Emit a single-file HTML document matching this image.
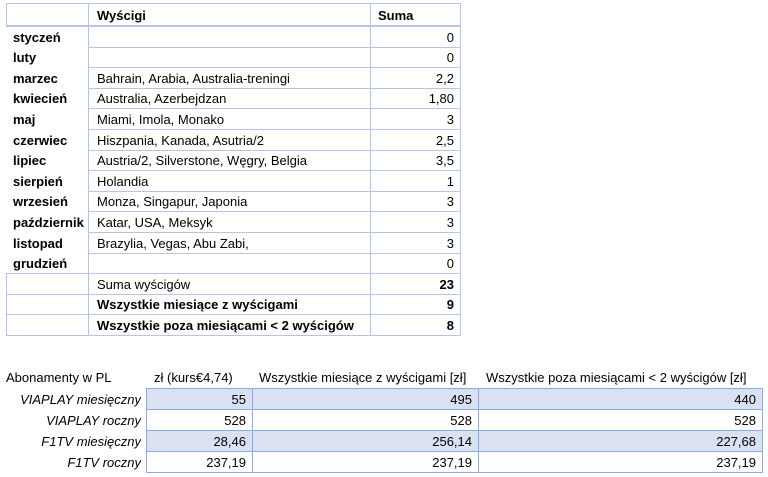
<!DOCTYPE html>
<html><head><meta charset="utf-8"><style>
*{margin:0;padding:0;box-sizing:border-box}
body{width:768px;height:477px;background:#fff;font-family:"Liberation Sans",sans-serif;color:#000;position:relative;overflow:hidden}
.c{position:absolute;white-space:nowrap;display:flex;align-items:center;overflow:hidden}
.t1{font-size:13px}
.t2{font-size:13px}
.r{justify-content:flex-end}
.b{font-weight:bold}
.i{font-style:italic}
</style></head><body>
<div id="a"></div>
<script>
var h='';
function cell(x,y,w,hh,txt,cls,st){h+='<div class="c '+cls+'" style="left:'+x+'px;top:'+y+'px;width:'+w+'px;height:'+hh+'px;'+(st||'')+'">'+txt+'</div>';}
var B1='#b4c6e7';
var rows=[["styczeń","","0"],["luty","","0"],["marzec","Bahrain, Arabia, Australia-treningi","2,2"],["kwiecień","Australia, Azerbejdzan","1,80"],["maj","Miami, Imola, Monako","3"],["czerwiec","Hiszpania, Kanada, Asutria/2","2,5"],["lipiec","Austria/2, Silverstone, Węgry, Belgia","3,5"],["sierpień","Holandia","1"],["wrzesień","Monza, Singapur, Japonia","3"],["październik","Katar, USA, Meksyk","3"],["listopad","Brazylia, Vegas, Abu Zabi,","3"],["grudzień","","0"]];
var bd='border:1px solid '+B1+';';
var T=26,rh=20.6;
function Y(k){return Math.round(T+rh*k);}
cell(6,3,83,T-3+1,'','t1',bd);
cell(88,3,283,T-3+1,'Wyścigi','t1 b','padding-left:8px;'+bd);
cell(370,3,91,T-3+1,'Suma','t1 b','padding-left:7px;'+bd);
h+='<div style="position:absolute;left:6px;top:'+(T-1)+'px;width:455px;height:2px;background:'+B1+'"></div>';
for(var k=0;k<12;k++){var yy=Y(k),hh=Y(k+1)-yy+1;
cell(6,yy,82,hh,rows[k][0],'t1 b','padding-left:7px;');
cell(88,yy,283,hh,rows[k][1],'t1','padding-left:8px;'+bd);
cell(370,yy,91,hh,rows[k][2],'t1 r','padding-right:6px;'+bd);}
var sr=[["Suma wyścigów","23",""],["Wszystkie miesiące z wyścigami","9","b"],["Wszystkie poza miesiącami < 2 wyścigów","8","b"]];
for(var k=0;k<3;k++){var yy=Y(12+k),hh=Y(13+k)-yy+1;
cell(6,yy,83,hh,'','t1',bd);
cell(88,yy,283,hh,sr[k][0],'t1 '+sr[k][2],'padding-left:8px;'+bd);
cell(370,yy,91,hh,sr[k][1],'t1 r b','padding-right:6px;'+bd);}
var B2='#8ea9db';
cell(6,367,140,21,'Abonamenty w PL','t2','');
cell(146,367,106,21,'zł (kurs€4,74)','t2','padding-left:8px;');
cell(252,367,226,21,'Wszystkie miesiące z wyścigami [zł]','t2','padding-left:7px;');
cell(478,367,284,21,'Wszystkie poza miesiącami < 2 wyścigów [zł]','t2','padding-left:8px;');
var r2=[["VIAPLAY miesięczny","55","495","440"],["VIAPLAY roczny","528","528","528"],["F1TV miesięczny","28,46","256,14","227,68"],["F1TV roczny","237,19","237,19","237,19"]];
var xs=[146,252,478,762];
for(var k=0;k<4;k++){var yy=388+21*k;var bg=(k%2==0)?'background:#d9e1f2;':'';
cell(0,yy,141,22,r2[k][0],'t2 r i','');
for(var j=0;j<3;j++)cell(xs[j],yy,xs[j+1]-xs[j]+1,22,r2[k][j+1],'t2 r','padding-right:6px;border:1px solid '+B2+';'+bg);}
document.getElementById('a').innerHTML=h;
</script>
</body></html>
